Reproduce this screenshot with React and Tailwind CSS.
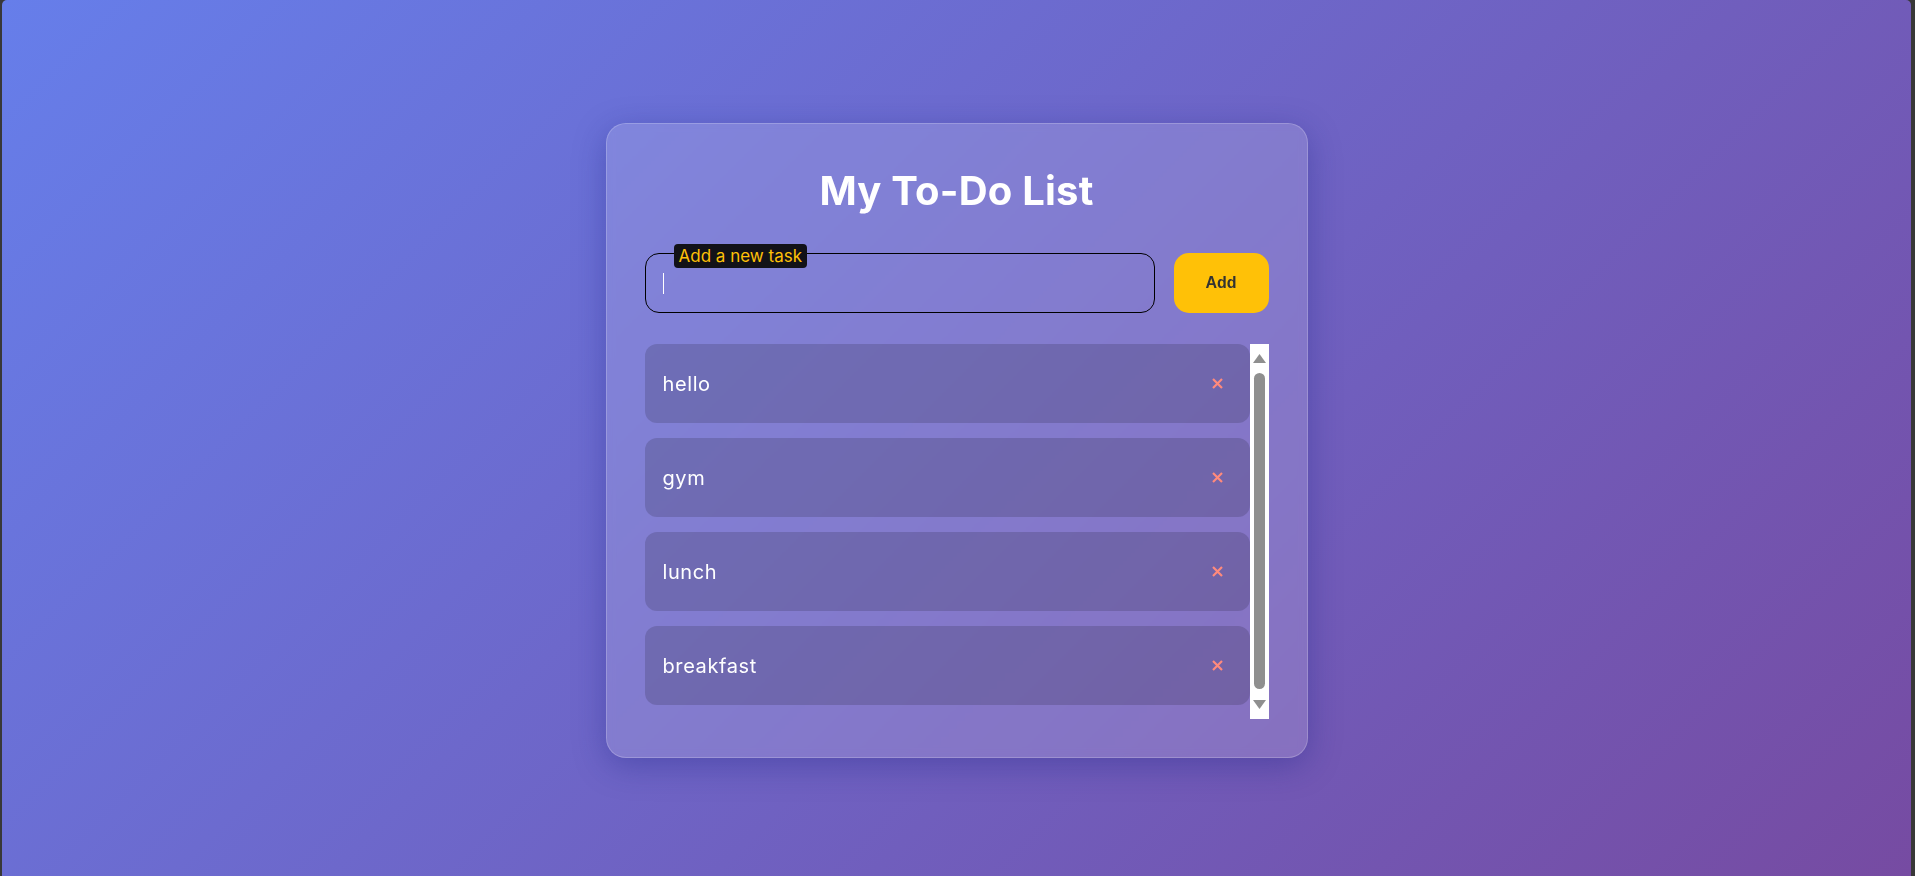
import React from "react";

const tasks = ["hello", "gym", "lunch", "breakfast"];

function XIcon() {
  return (
    <svg width="11" height="11" viewBox="0 0 11 11" className="block">
      <path d="M1 1 L10 10 M10 1 L1 10" stroke="#ff8a7c" strokeWidth="2.2" strokeLinecap="butt" />
    </svg>
  );
}

function Tri({ up }) {
  return (
    <svg width="13" height="9" viewBox="0 0 13 9" className="block">
      <path d={up ? "M6.5 0 L13 9 L0 9 Z" : "M0 0 L13 0 L6.5 9 Z"} fill="#8f8f8f" />
    </svg>
  );
}

export default function App() {
  return (
    <div className="h-[876px] w-full bg-[#383838] pl-[2px] pr-[4px] overflow-hidden">
      <div
        className="h-full w-full rounded-t-[5px] bg-[linear-gradient(135deg,#667eea_0%,#764ba2_100%)] flex items-center justify-center"
        style={{ fontFamily: "Inter, 'Noto Sans', sans-serif" }}
      >
        <div className="w-[702px] mt-[5px] rounded-[20px] border border-white/20 bg-white/15 shadow-[0_8px_32px_0_rgba(31,38,135,0.37)] backdrop-blur-[4px] pt-[39px] pb-[38px] px-[38px]">
          <h1 className="h-[60px] leading-[56px] mb-[30px] text-center text-white text-[40px] font-bold tracking-[0.2px]">
            My To-Do List
          </h1>

          <div className="flex gap-[19px] h-[60px] mb-[31px]">
            <div className="relative flex-1 border border-black rounded-[14px] flex items-center pl-[17px]">
              <span className="block w-px h-[21px] bg-white" />
              <span className="absolute left-[28px] -top-[10px] h-[24px] leading-[24px] px-[5px] rounded-[4px] bg-[#121218] text-[#FFC107] text-[17px] whitespace-nowrap">
                Add a new task
              </span>
            </div>
            <button
              className="w-[95px] h-[60px] rounded-[15px] bg-[#FFC107] text-[#333333] font-bold text-[16px]"
              style={{ fontFamily: "'Liberation Sans', Arial, sans-serif" }}
            >
              Add
            </button>
          </div>

          <div className="flex h-[375px]">
            <div className="flex-1 overflow-hidden">
              {tasks.map((t) => (
                <div
                  key={t}
                  className="flex items-center justify-between h-[79px] rounded-[12px] bg-black/15 pl-[18px] pr-[27px] mb-[15px]"
                >
                  <span className="text-white text-[20px] tracking-[0.6px]">{t}</span>
                  <XIcon />
                </div>
              ))}
            </div>
            <div className="w-[19px] bg-white flex flex-col items-center pt-[10px] pb-[10px]">
              <Tri up />
              <div className="w-[11px] h-[316px] mt-[10px] mb-[11px] rounded-full bg-[#8f8f8f]" />
              <Tri />
            </div>
          </div>
        </div>
      </div>
    </div>
  );
}
